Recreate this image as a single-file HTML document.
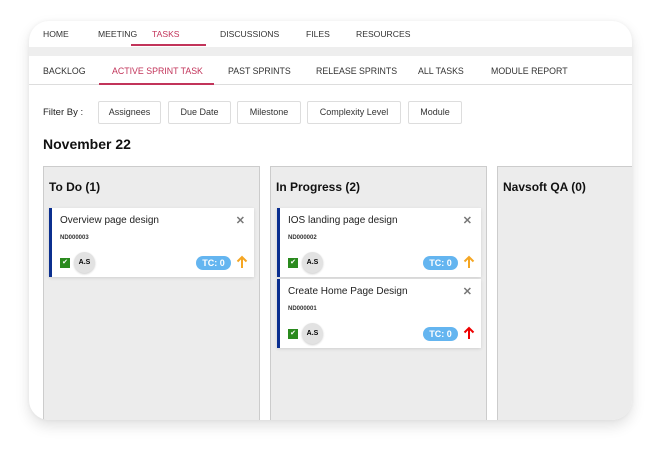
<!DOCTYPE html>
<html><head><style>
*{box-sizing:border-box;margin:0;padding:0}
body{width:660px;height:460px;background:#fff;font-family:"Liberation Sans",sans-serif;position:relative;overflow:hidden}
.card{position:absolute;left:29px;top:21px;width:603px;height:399px;background:#fff;border-radius:20px;box-shadow:0 6px 14px rgba(0,0,0,.12),0 0 4px rgba(0,0,0,.05);overflow:hidden}
.nav{position:absolute;top:0;left:0;right:0;height:26px}
.nav span,.sub span{position:absolute;font-size:8.6px;color:#333;top:8px}
.band{position:absolute;top:26px;left:0;right:0;height:9px;background:#eee}
.sub{position:absolute;top:35px;left:0;right:0;height:29px;border-bottom:1px solid #ddd}
.sub span{top:10px;font-size:8.8px}
.ul{position:absolute;height:2px;background:#c2345a}
.btn{position:absolute;top:80px;height:23px;border:1px solid #ddd;border-radius:2px;font-size:9px;color:#333;text-align:center;line-height:21px}
.col{position:absolute;top:145px;height:300px;background:#ececec;border:1px solid #ccc}
.col h3{position:absolute;top:13px;left:5px;font-size:12px;font-weight:bold;color:#111}
.t{position:absolute;background:#fff;border-left:3px solid #0b2f8f;box-shadow:0 1px 3px rgba(0,0,0,.12)}
.t .n{position:absolute;left:8px;top:7px;font-size:10px;color:#222}
.t .id{position:absolute;left:8px;top:27px;font-size:6px;font-weight:bold;color:#333}
.t .x{position:absolute;right:9px;top:6px;font-size:11px;font-weight:bold;color:#777}
.chk{position:absolute;left:8px;top:50px;width:10px;height:10px;background:#2a8a1e;color:#fff;font-size:7px;line-height:10px;text-align:center}
.av{position:absolute;left:22px;top:44px;width:21px;height:21px;border-radius:50%;background:#e2e2e2;font-size:7px;font-weight:bold;text-align:center;line-height:21px;box-shadow:0 1px 2px rgba(0,0,0,.2)}
.tc{position:absolute;right:23px;top:48px;width:35px;height:14px;border-radius:7px;background:#64b5f0;color:#fff;font-size:9px;font-weight:bold;text-align:center;line-height:14px}
.ar{position:absolute;right:6px;top:47px}
</style></head><body>
<div class="card">
<div class="nav">
<span style="left:14px">HOME</span><span style="left:69px">MEETING</span><span style="left:123px;color:#c2345a">TASKS</span><span style="left:191px">DISCUSSIONS</span><span style="left:277px">FILES</span><span style="left:327px">RESOURCES</span>
<div class="ul" style="left:102px;width:75px;top:23px"></div>
</div>
<div class="band"></div>
<div class="sub">
<span style="left:14px">BACKLOG</span><span style="left:83px;color:#c2345a">ACTIVE SPRINT TASK</span><span style="left:199px">PAST SPRINTS</span><span style="left:287px">RELEASE SPRINTS</span><span style="left:389px">ALL TASKS</span><span style="left:462px">MODULE REPORT</span>
<div class="ul" style="left:70px;width:115px;top:27px"></div>
</div>
<div style="position:absolute;left:14px;top:86px;font-size:9.5px;color:#222">Filter By :</div>
<div class="btn" style="left:69px;width:63px">Assignees</div>
<div class="btn" style="left:139px;width:63px">Due Date</div>
<div class="btn" style="left:208px;width:64px">Milestone</div>
<div class="btn" style="left:278px;width:94px">Complexity Level</div>
<div class="btn" style="left:379px;width:54px">Module</div>
<div style="position:absolute;left:14px;top:115px;font-size:14px;font-weight:bold;color:#111">November 22</div>
<div class="col" style="left:14px;width:217px"><h3>To Do (1)</h3>
<div class="t" style="left:5px;top:41px;width:205px;height:69px"><div class="n">Overview page design</div><div class="x">✕</div><div class="id">ND000003</div><div class="chk">✔</div><div class="av">A.S</div><div class="tc">TC: 0</div><svg class="ar" width="12" height="14" viewBox="0 0 12 14"><path d="M6 13V2M1.5 6.5L6 2l4.5 4.5" fill="none" stroke="#f5a623" stroke-width="2"/></svg></div>
</div>
<div class="col" style="left:241px;width:217px"><h3>In Progress (2)</h3>
<div class="t" style="left:6px;top:41px;width:204px;height:69px"><div class="n">IOS landing page design</div><div class="x">✕</div><div class="id">ND000002</div><div class="chk">✔</div><div class="av">A.S</div><div class="tc">TC: 0</div><svg class="ar" width="12" height="14" viewBox="0 0 12 14"><path d="M6 13V2M1.5 6.5L6 2l4.5 4.5" fill="none" stroke="#f5a623" stroke-width="2"/></svg></div>
<div class="t" style="left:6px;top:112px;width:204px;height:69px"><div class="n">Create Home Page Design</div><div class="x">✕</div><div class="id">ND000001</div><div class="chk">✔</div><div class="av">A.S</div><div class="tc">TC: 0</div><svg class="ar" width="12" height="14" viewBox="0 0 12 14"><path d="M6 13V2M1.5 6.5L6 2l4.5 4.5" fill="none" stroke="#e00" stroke-width="2"/></svg></div>
</div>
<div class="col" style="left:468px;width:160px"><h3>Navsoft QA (0)</h3></div>
</div>
</body></html>
